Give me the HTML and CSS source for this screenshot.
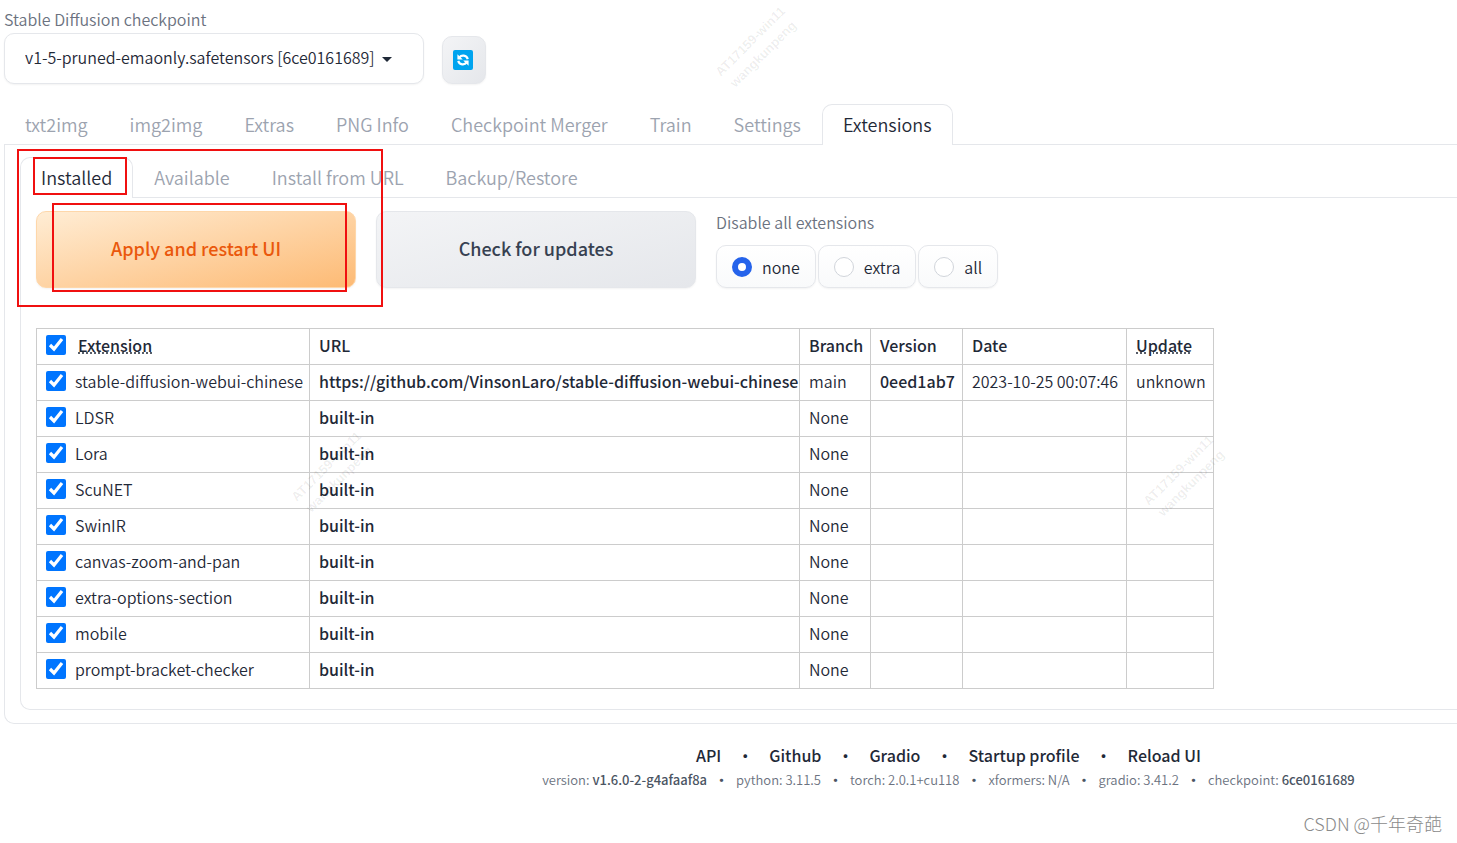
FILE: index.html
```html
<!DOCTYPE html>
<html lang="en">
<head>
<meta charset="utf-8">
<title>Stable Diffusion</title>
<link rel="stylesheet" href="styles.css">
</head>
<body>
<header class="quick">
  <div class="field">
    <label class="caption" for="ckpt">Stable Diffusion checkpoint</label>
    <div class="select-wrap">
      <select id="ckpt" class="select"><option>v1-5-pruned-emaonly.safetensors [6ce0161689]</option></select>
      <svg class="caret" viewBox="0 0 10 5" aria-hidden="true"><path d="M0 0h10L5 5z"/></svg>
    </div>
  </div>
  <button class="refresh" aria-label="Refresh">
    <svg viewBox="0 0 20 20" aria-hidden="true">
      <rect width="20" height="20" rx="2" fill="#00a4ef"/>
      <g fill="none" stroke="#fff" stroke-width="2.2"><path d="M6.4 7.6C8.4 4.6 13.4 5 14.8 9.2"/><path d="M13.6 12.4C11.6 15.4 6.6 15 5.2 10.8"/></g>
      <path fill="#fff" d="M4.4 4.2v5.2h5.4zM15.6 15.8v-5.2h-5.4z"/>
    </svg>
  </button>
</header>

<main>
  <nav class="tabs">
    <button class="tab">txt2img</button><button class="tab">img2img</button><button class="tab">Extras</button><button class="tab">PNG Info</button><button class="tab">Checkpoint Merger</button><button class="tab">Train</button><button class="tab">Settings</button><button class="tab active">Extensions</button>
  </nav>
  <section class="panel outer">
    <nav class="tabs">
      <button class="tab active">Installed</button><button class="tab">Available</button><button class="tab">Install from URL</button><button class="tab">Backup/Restore</button>
    </nav>
    <div class="panel inner">
      <div class="actions">
        <button class="btn primary">Apply and restart UI</button>
        <button class="btn">Check for updates</button>
        <fieldset class="group">
          <legend class="caption">Disable all extensions</legend>
          <div class="radios">
            <label class="radio"><input type="radio" name="disable" checked>none</label>
            <label class="radio"><input type="radio" name="disable">extra</label>
            <label class="radio"><input type="radio" name="disable">all</label>
          </div>
        </fieldset>
      </div>
      <table class="ext">
        <colgroup><col class="c-name"><col class="c-url"><col class="c-branch"><col class="c-version"><col class="c-date"><col class="c-update"></colgroup>
        <thead>
          <tr><th><label class="check head"><input type="checkbox" checked><abbr title="Extension">Extension</abbr></label></th><th>URL</th><th>Branch</th><th>Version</th><th>Date</th><th><abbr title="Update">Update</abbr></th></tr>
        </thead>
        <tbody>
          <tr><td><label class="check"><input type="checkbox" checked>stable-diffusion-webui-chinese</label></td><td><a href="#">https://github.com/VinsonLaro/stable-diffusion-webui-chinese</a></td><td>main</td><td><a href="#">0eed1ab7</a></td><td>2023-10-25 00:07:46</td><td>unknown</td></tr>
          <tr><td><label class="check"><input type="checkbox" checked>LDSR</label></td><td><a href="#">built-in</a></td><td>None</td><td></td><td></td><td></td></tr>
          <tr><td><label class="check"><input type="checkbox" checked>Lora</label></td><td><a href="#">built-in</a></td><td>None</td><td></td><td></td><td></td></tr>
          <tr><td><label class="check"><input type="checkbox" checked>ScuNET</label></td><td><a href="#">built-in</a></td><td>None</td><td></td><td></td><td></td></tr>
          <tr><td><label class="check"><input type="checkbox" checked>SwinIR</label></td><td><a href="#">built-in</a></td><td>None</td><td></td><td></td><td></td></tr>
          <tr><td><label class="check"><input type="checkbox" checked>canvas-zoom-and-pan</label></td><td><a href="#">built-in</a></td><td>None</td><td></td><td></td><td></td></tr>
          <tr><td><label class="check"><input type="checkbox" checked>extra-options-section</label></td><td><a href="#">built-in</a></td><td>None</td><td></td><td></td><td></td></tr>
          <tr><td><label class="check"><input type="checkbox" checked>mobile</label></td><td><a href="#">built-in</a></td><td>None</td><td></td><td></td><td></td></tr>
          <tr><td><label class="check"><input type="checkbox" checked>prompt-bracket-checker</label></td><td><a href="#">built-in</a></td><td>None</td><td></td><td></td><td></td></tr>
        </tbody>
      </table>
    </div>
  </section>
</main>

<footer class="footer">
  <div class="links"><a href="#">API</a><span>•</span><a href="#">Github</a><span>•</span><a href="#">Gradio</a><span>•</span><a href="#">Startup profile</a><span>•</span><a href="#">Reload UI</a></div>
  <div class="versions"><span>version: <a href="#">v1.6.0-2-g4afaaf8a</a></span><b>•</b><span>python: 3.11.5</span><b>•</b><span>torch: 2.0.1+cu118</span><b>•</b><span>xformers: N/A</span><b>•</b><span>gradio: 3.41.2</span><b>•</b><span>checkpoint: <a href="#">6ce0161689</a></span></div>
</footer>
<div class="credit">CSDN @千年奇葩</div>

<div class="mark m1">AT17159-win11<br>wangkunpeng</div>
<div class="mark m2">AT17159-win11<br>wangkunpeng</div>
<div class="mark m3">AT17159-win11<br>wangkunpeng</div>
<div class="frame f1"></div>
<div class="frame f2"></div>
<div class="frame f3"></div>
</body>
</html>
```
FILE: styles.css
```css
* { box-sizing: border-box; }
body {
  margin: 0;
  padding: 7px 0 0 4px;
  position: relative;
  min-height: 100vh;
  overflow-x: hidden;
  background: #fff;
  color: #1f2937;
  font: 350 16px/24px "Noto Sans CJK SC", "Noto Sans", sans-serif;
}
button, select, input { font: inherit; color: inherit; margin: 0; }
a { color: inherit; text-decoration: none; font-weight: 500; }

.quick { display: flex; align-items: flex-end; gap: 18px; }
.field { width: 420px; }
.caption { display: block; padding: 0; color: #6b7280; line-height: 24px; }
.select-wrap { position: relative; margin-top: 2px; }
.select {
  display: block;
  appearance: none;
  width: 100%;
  height: 51px;
  padding: 0 20px 3px;
  border: 1px solid #e5e7eb;
  border-radius: 10px;
  background: #fff;
  box-shadow: 0 1px 2px rgba(0, 0, 0, .05);
}
.caret { position: absolute; right: 32px; top: 24px; width: 10px; height: 5px; fill: #1f2937; }
.refresh {
  display: grid;
  place-items: center;
  width: 44px;
  height: 48px;
  padding: 0 2px 0 0;
  border: 1px solid #e5e7eb;
  border-radius: 10px;
  background: linear-gradient(to bottom right, #f3f4f6, #e5e7eb);
  box-shadow: 0 1px 2px rgba(0, 0, 0, .05);
}
.refresh svg { width: 20px; height: 20px; }

main { margin-top: 20px; }
.tabs { display: flex; border-bottom: 1px solid #e5e7eb; }
.tab {
  height: 41px;
  margin-bottom: -1px;
  padding: 0 20px 2px;
  border: 1px solid transparent;
  border-bottom: 0;
  border-radius: 10px 10px 0 0;
  background: none;
  color: #9ca3af;
  font-size: 18px;
  white-space: nowrap;
}
.tab.active { border-color: #e5e7eb; background: #fff; color: #1f2937; }
.panel { border: 1px solid #e5e7eb; border-width: 0 0 1px 1px; border-radius: 0 0 0 10px; }
.outer { padding: 12px 0 13px 15px; }
.inner { padding: 13px 0 20px 15px; }

.actions { display: flex; gap: 20px; }
.btn {
  width: 320px;
  height: 77px;
  padding: 0 0 3px;
  border: 1px solid #e5e7eb;
  border-radius: 10px;
  background: linear-gradient(to bottom right, #f3f4f6, #e5e7eb);
  box-shadow: 0 1px 2px rgba(0, 0, 0, .05);
  color: #374151;
  font-size: 18px;
  font-weight: 500;
}
.btn.primary { border-color: #fed7aa; background: linear-gradient(to bottom right, #ffedd5, #fdba74); color: #ea580c; }
.group { margin: -1px 0 0; padding: 0; border: 0; }
.radios { display: flex; gap: 2px; margin-top: 11px; }
.radio {
  display: flex;
  align-items: center;
  gap: 10px;
  height: 43px;
  padding: 0 15px;
  border: 1px solid #e5e7eb;
  border-radius: 10px;
  background: linear-gradient(#fff, #f9fafb);
  box-shadow: 0 1px 2px rgba(0, 0, 0, .05);
}
.radio input { appearance: none; width: 20px; height: 20px; border: 1px solid #d1d5db; border-radius: 50%; background: #fff; }
.radio input:checked { border: 6px solid #2563eb; }

.ext { width: 1178px; margin-top: 40px; border-collapse: collapse; table-layout: fixed; }
.c-name { width: 273px; }
.c-url { width: 490px; }
.c-branch { width: 71px; }
.c-version { width: 92px; }
.c-date { width: 164px; }
.c-update { width: 87px; }
.ext th, .ext td { height: 36px; padding: 0 0 3px 9px; border: 1px solid #ccc; text-align: left; white-space: nowrap; }
.ext th { font-weight: 500; }
.check { display: flex; align-items: center; gap: 9px; }
.check.head { gap: 12px; }
.check input { flex: none; width: 20px; height: 20px; accent-color: #0075ff; }
abbr { text-decoration: underline dotted; }

.footer { padding: 19px 0 0 30%; text-align: center; }
.links, .versions { display: flex; justify-content: center; white-space: nowrap; }
.links { gap: 16px; font-weight: 500; }
.versions { gap: 8px; padding-top: 1px; color: #6b7280; font-size: 13px; }
.versions a, .versions b { color: #4b5563; }
.credit { margin: 19px 15px 0 0; color: #8a8a8a; font-size: 18px; font-weight: 300; text-align: right; }

.mark {
  position: absolute;
  width: 100px;
  transform: rotate(-45deg);
  color: rgba(0, 0, 0, .07);
  font: bold 13px/18px "Liberation Sans", sans-serif;
  text-align: center;
  pointer-events: none;
}
.m1 { left: 707px; top: 30px; }
.m2 { left: 283px; top: 455px; }
.m3 { left: 1135px; top: 459px; }
.frame { position: absolute; border: 2px solid #f01010; pointer-events: none; }
.f1 { left: 17px; top: 149px; width: 366px; height: 158px; }
.f2 { left: 33px; top: 157px; width: 94px; height: 38px; }
.f3 { left: 52px; top: 203px; width: 295px; height: 89px; }
```
